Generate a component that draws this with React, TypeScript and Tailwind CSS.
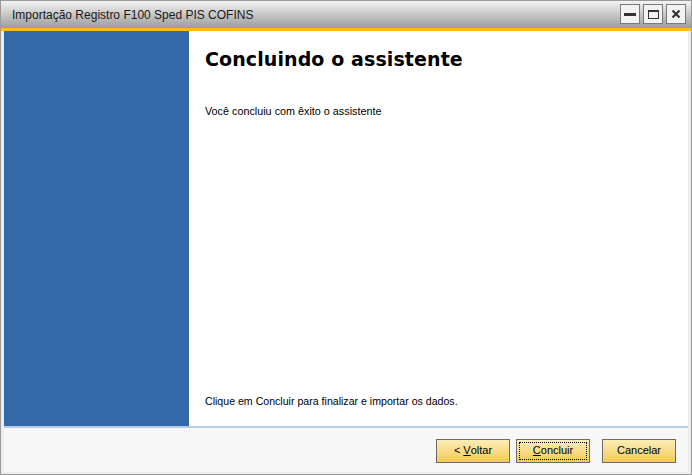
import React from "react";

const WinButton: React.FC<{ children: React.ReactNode }> = ({ children }) => (
  <div className="w-[20px] h-[20px] bg-[#f2f2f2] border border-[#7a7a7a] flex items-center justify-center">
    {children}
  </div>
);

const WizButton: React.FC<{ children: React.ReactNode; focused?: boolean; className?: string }> = ({
  children,
  focused,
  className,
}) => (
  <button
    className={
      "w-[74px] h-[24px] border border-[#6b6b6b] bg-gradient-to-b from-[#fcedb6] to-[#f2cb52] p-[2px] text-[11px] text-black " +
      (className || "")
    }
  >
    <div className={"w-full h-full flex items-center justify-center " + (focused ? "border border-dotted border-black" : "")}>
      {children}
    </div>
  </button>
);

const App: React.FC = () => {
  return (
    <div
      className="w-[692px] h-[475px] bg-[#e6e6e6] border border-[#9a9a9a] flex flex-col"
      style={{ fontFamily: '"Liberation Sans", Arial, sans-serif' }}
    >
      {/* title bar */}
      <div className="h-[27px] bg-gradient-to-b from-[#f4f4f4] to-[#9c9c9c] flex items-center justify-between pl-[11px] pr-[5px] shrink-0">
        <span className="text-[12px] text-[#1a1a1a] pt-[1px]">Importação Registro F100 Sped PIS COFINS</span>
        <div className="flex gap-[3px] mt-[-1px]">
          <WinButton>
            <div className="w-[12px] h-[3px] bg-[#333]" />
          </WinButton>
          <WinButton>
            <div className="w-[11px] h-[9px] border border-[#333] border-t-[2px]" />
          </WinButton>
          <WinButton>
            <svg width="10" height="10" viewBox="0 0 10 10">
              <path d="M1.5 1.5 L8.5 8.5 M8.5 1.5 L1.5 8.5" stroke="#333" strokeWidth="2.2" />
            </svg>
          </WinButton>
        </div>
      </div>
      <div className="h-[3px] bg-[#fbbd18] shrink-0" />

      <div className="flex-1 flex flex-col px-[3px] pb-[2px] bg-[#ececec]">
        {/* body */}
        <div className="flex-1 flex bg-white">
          <div className="w-[185px] bg-[#3369a8] shrink-0" />
          <div className="flex-1 flex flex-col pl-[16px] pt-[14px] pb-[16px]">
            <h1
              className="text-[19px] font-bold text-black leading-[28px] tracking-[0.1px]"
              style={{ fontFamily: '"DejaVu Sans", Verdana, sans-serif' }}
            >
              Concluindo o assistente
            </h1>
            <p className="text-[10.8px] text-black mt-[30px]">Você concluiu com êxito o assistente</p>
            <div className="flex-1" />
            <p className="text-[10.6px] text-black">Clique em Concluir para finalizar e importar os dados.</p>
          </div>
        </div>
        <div className="h-[2px] bg-[#b7cbe4]" />
        {/* footer */}
        <div className="h-[44px] bg-[#f7f7f7] flex items-center justify-end gap-[6px] pr-[12px] pt-[1px]">
          <WizButton>
            &lt; <span className="underline ml-[3px]">V</span>oltar
          </WizButton>
          <WizButton focused>
            <span className="underline">C</span>oncluir
          </WizButton>
          <WizButton className="ml-[6px]">Cancelar</WizButton>
        </div>
      </div>
    </div>
  );
};

export default App;
